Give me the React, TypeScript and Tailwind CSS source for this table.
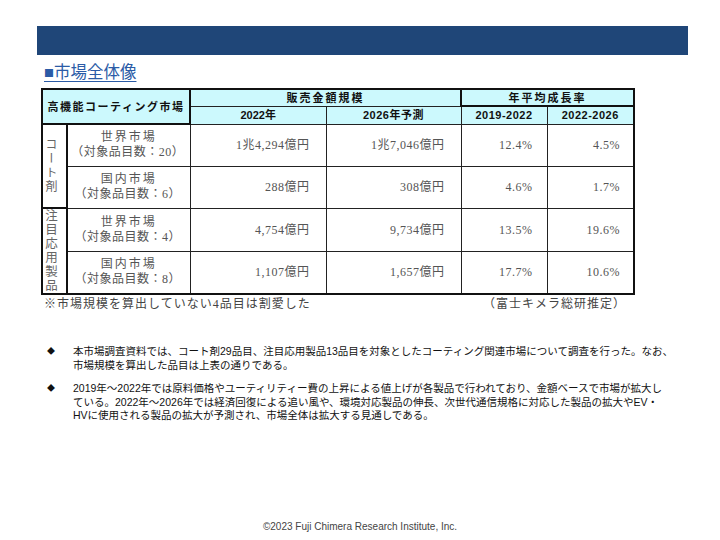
import React from 'react';

interface Row {
  name: string;
  count: string;
  v2022: string;
  v2026: string;
  g1: string;
  g2: string;
}

const rows: Row[] = [
  { name: '世界市場', count: '（対象品目数：20）', v2022: '1兆4,294億円', v2026: '1兆7,046億円', g1: '12.4%', g2: '4.5%' },
  { name: '国内市場', count: '（対象品目数：6）', v2022: '288億円', v2026: '308億円', g1: '4.6%', g2: '1.7%' },
  { name: '世界市場', count: '（対象品目数：4）', v2022: '4,754億円', v2026: '9,734億円', g1: '13.5%', g2: '19.6%' },
  { name: '国内市場', count: '（対象品目数：8）', v2022: '1,107億円', v2026: '1,657億円', g1: '17.7%', g2: '10.6%' },
];

const jp = "font-['Liberation_Sans','Noto_Sans_CJK_JP',sans-serif]";
const serif = "font-['Liberation_Serif','Noto_Sans_CJK_JP',serif]";

export default function App() {
  return (
    <div className={`w-[720px] h-[540px] bg-white flex flex-col ${jp}`}>
      {/* banner */}
      <div className="ml-[37px] mt-[26px] w-[651px] h-[29px] bg-[#1f4678]" />

      {/* title */}
      <div className="ml-[44px] mt-[6px] text-[16.5px] leading-[22px] text-[#2b5ba6] underline underline-offset-[3px]">
        ■市場全体像
      </div>

      {/* table */}
      <table className="ml-[41px] mt-[5px] w-[592px] table-fixed border-collapse border-2 border-[#111]">
        <colgroup>
          <col className="w-[25px]" />
          <col className="w-[123px]" />
          <col className="w-[136px]" />
          <col className="w-[135px]" />
          <col className="w-[86px]" />
          <col className="w-[87px]" />
        </colgroup>
        <thead className="bg-[#ccf9fd] text-[#111] font-bold text-[11px]">
          <tr className="h-[17px]">
            <th colSpan={2} rowSpan={2} className="border-2 border-[#111] tracking-[1.5px] font-bold leading-[14px]">
              高機能コーティング市場
            </th>
            <th colSpan={2} className="border border-[#222] leading-[14px] tracking-[2px] font-bold">
              販売金額規模
            </th>
            <th colSpan={2} className="border-2 border-[#111] leading-[14px] tracking-[2px] font-bold">
              年平均成長率
            </th>
          </tr>
          <tr className="h-[18px]">
            <th className="border border-[#222] leading-[14px] font-bold">2022年</th>
            <th className="border border-[#222] leading-[14px] font-bold tracking-[0.5px]">2026年予測</th>
            <th className="border border-[#222] leading-[14px] font-bold tracking-[0.5px]">2019-2022</th>
            <th className="border border-[#222] leading-[14px] font-bold tracking-[0.5px]">2022-2026</th>
          </tr>
        </thead>
        <tbody className={`${serif} text-[#555] text-[12px]`}>
          {rows.map((r, i) => (
            <tr key={i} className="h-[42px]">
              {i === 0 && (
                <td rowSpan={2} className="border-2 border-[#111] align-middle">
                  <span className="block mx-auto w-[13px] [writing-mode:vertical-rl] text-[12px] leading-[13px] tracking-[2px] text-[#666]">
                    コート剤
                  </span>
                </td>
              )}
              {i === 2 && (
                <td rowSpan={2} className="border-2 border-[#111] align-middle">
                  <span className="block mx-auto w-[13px] [writing-mode:vertical-rl] text-[12.5px] leading-[13px] tracking-[1.5px] text-[#666]">
                    注目応用製品
                  </span>
                </td>
              )}
              <td className="border border-[#222] text-center leading-[15px] tracking-[0.5px]">
                <div className="tracking-[2px]">{r.name}</div>
                <div className="-ml-[2px]">{r.count}</div>
              </td>
              <td className="border border-[#222] text-right pr-[16px] tracking-[0.5px]">{r.v2022}</td>
              <td className="border border-[#222] text-right pr-[16px] tracking-[0.5px]">{r.v2026}</td>
              <td className="border border-[#222] text-right pr-[14px] tracking-[0.5px]">{r.g1}</td>
              <td className="border-2 border-[#111] border-l border-l-[#222] border-t border-t-[#222] border-b border-b-[#222] text-right pr-[13px] tracking-[0.5px]">
                {r.g2}
              </td>
            </tr>
          ))}
        </tbody>
      </table>

      {/* note */}
      <div className={`ml-[44px] w-[582px] mt-[1px] flex justify-between text-[12px] leading-[16px] text-[#444] tracking-[1px] ${serif}`}>
        <span>※市場規模を算出していない4品目は割愛した</span>
        <span>（富士キメラ総研推定）</span>
      </div>

      {/* bullets */}
      <div className="mt-[33px] flex flex-col gap-[10px] text-[10.5px] leading-[13.5px] text-[#111]">
        <div className="flex">
          <span className="shrink-0 w-[73px] pl-[47px] text-[8px] leading-[13.5px]">◆</span>
          <p className="whitespace-nowrap">
            本市場調査資料では、コート剤29品目、注目応用製品13品目を対象としたコーティング関連市場について調査を行った。なお、
            <br />
            市場規模を算出した品目は上表の通りである。
          </p>
        </div>
        <div className="flex">
          <span className="shrink-0 w-[73px] pl-[47px] text-[8px] leading-[13.5px]">◆</span>
          <p className="whitespace-nowrap">
            2019年～2022年では原料価格やユーティリティー費の上昇による値上げが各製品で行われており、金額ベースで市場が拡大し
            <br />
            ている。2022年～2026年では経済回復による追い風や、環境対応製品の伸長、次世代通信規格に対応した製品の拡大やEV・
            <br />
            HVに使用される製品の拡大が予測され、市場全体は拡大する見通しである。
          </p>
        </div>
      </div>

      {/* footer */}
      <div className="mt-auto mb-[6px] text-center text-[10px] text-[#444]">
        ©2023 Fuji Chimera Research Institute, Inc.
      </div>
    </div>
  );
}
